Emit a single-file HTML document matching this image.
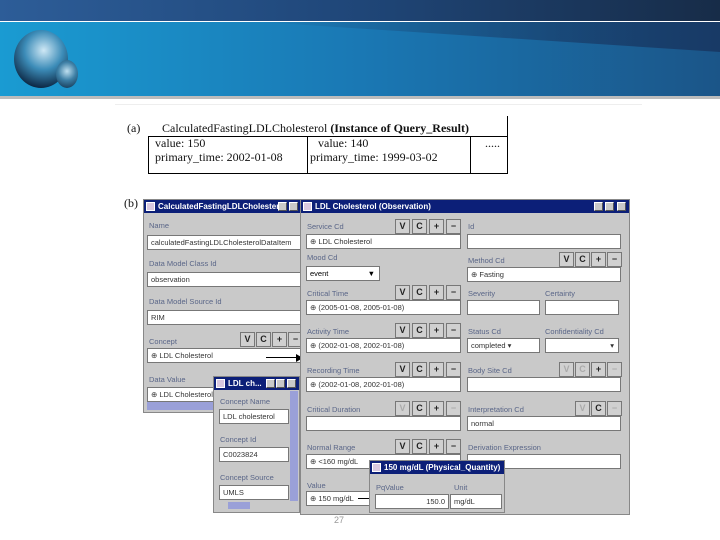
<!DOCTYPE html><html><head><style>
*{margin:0;padding:0;box-sizing:border-box}
body{width:720px;height:540px;position:relative;background:#fff;overflow:hidden;font-family:"Liberation Sans",sans-serif}
.a{position:absolute}
.w{position:absolute;background:#c9c9c9;border:1px solid #888}
.t{position:absolute;background:#0c1f78;color:#fff;font-size:8px;font-weight:bold;line-height:13px;padding-left:14px;white-space:nowrap;overflow:hidden}
.ic{position:absolute;left:2px;top:2px;width:9px;height:9px;background:#d8c8e0;border:1px solid #fff}
.tb{position:absolute;top:2px;width:9px;height:9px;background:#c9c9c9;border:1px solid #fff;border-right-color:#555;border-bottom-color:#555}
.l{position:absolute;font-size:7.5px;color:#5a6688;white-space:nowrap}
.f{position:absolute;background:#fff;border:1px solid #777;font-size:7.5px;line-height:13px;padding-left:3px;color:#333;white-space:nowrap;overflow:hidden}
.b{position:absolute;width:15px;height:15px;border:1px solid #777;background:#d0d0d0;font-size:9px;font-weight:bold;text-align:center;line-height:13px;color:#222}
.g{color:#aaa}
.s{font-family:"Liberation Serif",serif;font-size:12px;color:#111;position:absolute;white-space:nowrap}
</style></head><body>
<div class="a" style="left:0;top:0;width:720px;height:21px;background:linear-gradient(90deg,#2d5d98,#1f4678 50%,#172c48)"></div>
<div class="a" style="left:0;top:22px;width:720px;height:74px;background:linear-gradient(90deg,#1a9bd2,#1a78b4 50%,#1b5588)"></div>
<div class="a" style="left:260px;top:22px;width:460px;height:30px;background:linear-gradient(90deg,rgba(20,50,90,0),#183a66);clip-path:polygon(0 0,100% 0,100% 100%)"></div>
<div class="a" style="left:0;top:96px;width:720px;height:3px;background:#bcbcbc"></div>
<div class="a" style="left:14px;top:30px;width:54px;height:58px;border-radius:50%;background:radial-gradient(circle at 55% 35%,#cfe8f5,#3c8cb8 40%,#0b2440 80%)"></div>
<div class="a" style="left:56px;top:60px;width:22px;height:28px;border-radius:50%;background:radial-gradient(circle at 50% 40%,#bfe0f0,#3d7fa5 45%,#0d2a44)"></div>
<div class="a" style="left:115px;top:104px;width:527px;height:1px;background:#eee"></div>
<div class="s" style="left:127px;top:121px">(a)</div>
<div class="s" style="left:162px;top:121px">CalculatedFastingLDLCholesterol <b>(Instance of Query_Result)</b></div>
<div class="a" style="left:507px;top:116px;width:1px;height:58px;background:#000"></div>
<div class="a" style="left:148px;top:136px;width:360px;height:1px;background:#000"></div>
<div class="a" style="left:148px;top:173px;width:360px;height:1px;background:#000"></div>
<div class="a" style="left:148px;top:136px;width:1px;height:38px;background:#000"></div>
<div class="a" style="left:307px;top:136px;width:1px;height:38px;background:#000"></div>
<div class="a" style="left:470px;top:136px;width:1px;height:38px;background:#000"></div>
<div class="s" style="left:155px;top:136px">value: 150</div>
<div class="s" style="left:155px;top:150px">primary_time: 2002-01-08</div>
<div class="s" style="left:318px;top:136px">value: 140</div>
<div class="s" style="left:310px;top:150px">primary_time: 1999-03-02</div>
<div class="s" style="left:485px;top:136px">.....</div>
<div class="s" style="left:124px;top:196px">(b)</div>

<div class="w" style="left:143px;top:199px;width:158px;height:214px">
<div class="t" style="left:0;top:0;width:156px">CalculatedFastingLDLCholester...</div><div class="ic"></div>
<div class="tb" style="left:134px"></div><div class="tb" style="left:145px"></div>
<div class="l" style="left:5px;top:21px">Name</div>
<div class="f" style="left:3px;top:35px;width:155px;height:15px">calculatedFastingLDLCholesterolDataItem</div>
<div class="l" style="left:5px;top:59px">Data Model Class Id</div>
<div class="f" style="left:3px;top:72px;width:155px;height:15px">observation</div>
<div class="l" style="left:5px;top:97px">Data Model Source Id</div>
<div class="f" style="left:3px;top:110px;width:155px;height:15px">RIM</div>
<div class="l" style="left:5px;top:137px">Concept</div>
<div class="b" style="left:96px;top:132px">V</div><div class="b" style="left:112px;top:132px">C</div><div class="b" style="left:128px;top:132px">+</div><div class="b" style="left:144px;top:132px">−</div>
<div class="f" style="left:3px;top:148px;width:155px;height:15px">⊕ LDL Cholesterol</div>
<div class="l" style="left:5px;top:175px">Data Value</div>
<div class="f" style="left:3px;top:187px;width:155px;height:15px">⊕ LDL Cholesterol</div>
<div class="a" style="left:3px;top:202px;width:70px;height:8px;background:#9aa0d8"></div>
</div>
<div class="a" style="left:266px;top:357px;width:34px;height:1px;background:#000"></div>
<div class="a" style="left:296px;top:354px;border-left:7px solid #000;border-top:4px solid transparent;border-bottom:4px solid transparent"></div>

<div class="w" style="left:300px;top:199px;width:330px;height:316px">
<div class="t" style="left:0;top:0;width:328px">LDL Cholesterol (Observation)</div><div class="ic"></div>
<div class="tb" style="left:293px"></div><div class="tb" style="left:304px"></div><div class="tb" style="left:316px"></div>
<div class="l" style="left:6px;top:22px">Service Cd</div>
<div class="b" style="left:94px;top:19px">V</div><div class="b" style="left:111px;top:19px">C</div><div class="b" style="left:128px;top:19px">+</div><div class="b" style="left:145px;top:19px">−</div>
<div class="f" style="left:5px;top:34px;width:155px;height:15px">⊕ LDL Cholesterol</div>
<div class="l" style="left:167px;top:22px">Id</div>
<div class="f" style="left:166px;top:34px;width:154px;height:15px"></div>
<div class="l" style="left:6px;top:53px">Mood Cd</div>
<div class="f" style="left:5px;top:66px;width:74px;height:15px;color:#000">event <span style="float:right;padding-right:4px">▼</span></div>
<div class="l" style="left:167px;top:56px">Method Cd</div>
<div class="b" style="left:258px;top:52px">V</div><div class="b" style="left:274px;top:52px">C</div><div class="b" style="left:290px;top:52px">+</div><div class="b" style="left:306px;top:52px">−</div>
<div class="f" style="left:166px;top:67px;width:154px;height:15px">⊕ Fasting</div>
<div class="l" style="left:6px;top:89px">Critical Time</div>
<div class="b" style="left:94px;top:85px">V</div><div class="b" style="left:111px;top:85px">C</div><div class="b" style="left:128px;top:85px">+</div><div class="b" style="left:145px;top:85px">−</div>
<div class="f" style="left:5px;top:100px;width:155px;height:15px">⊕ (2005-01-08, 2005-01-08)</div>
<div class="l" style="left:167px;top:89px">Severity</div><div class="l" style="left:244px;top:89px">Certainty</div>
<div class="f" style="left:166px;top:100px;width:73px;height:15px"></div><div class="f" style="left:244px;top:100px;width:74px;height:15px"></div>
<div class="l" style="left:6px;top:127px">Activity Time</div>
<div class="b" style="left:94px;top:123px">V</div><div class="b" style="left:111px;top:123px">C</div><div class="b" style="left:128px;top:123px">+</div><div class="b" style="left:145px;top:123px">−</div>
<div class="f" style="left:5px;top:138px;width:155px;height:15px">⊕ (2002-01-08, 2002-01-08)</div>
<div class="l" style="left:167px;top:127px">Status Cd</div><div class="l" style="left:244px;top:127px">Confidentiality Cd</div>
<div class="f" style="left:166px;top:138px;width:73px;height:15px">completed ▾</div><div class="f" style="left:244px;top:138px;width:74px;height:15px;text-align:right;padding-right:4px">▾</div>
<div class="l" style="left:6px;top:166px">Recording Time</div>
<div class="b" style="left:94px;top:162px">V</div><div class="b" style="left:111px;top:162px">C</div><div class="b" style="left:128px;top:162px">+</div><div class="b" style="left:145px;top:162px">−</div>
<div class="f" style="left:5px;top:177px;width:155px;height:15px">⊕ (2002-01-08, 2002-01-08)</div>
<div class="l" style="left:167px;top:166px">Body Site Cd</div>
<div class="b g" style="left:258px;top:162px">V</div><div class="b g" style="left:274px;top:162px">C</div><div class="b" style="left:290px;top:162px">+</div><div class="b g" style="left:306px;top:162px">−</div>
<div class="f" style="left:166px;top:177px;width:154px;height:15px"></div>
<div class="l" style="left:6px;top:205px">Critical Duration</div>
<div class="b g" style="left:94px;top:201px">V</div><div class="b" style="left:111px;top:201px">C</div><div class="b" style="left:128px;top:201px">+</div><div class="b g" style="left:145px;top:201px">−</div>
<div class="f" style="left:5px;top:216px;width:155px;height:15px"></div>
<div class="l" style="left:167px;top:205px">Interpretation Cd</div>
<div class="b g" style="left:274px;top:201px">V</div><div class="b" style="left:290px;top:201px">C</div><div class="b g" style="left:306px;top:201px">−</div>
<div class="f" style="left:166px;top:216px;width:154px;height:15px">normal</div>
<div class="l" style="left:6px;top:243px">Normal Range</div>
<div class="b" style="left:94px;top:239px">V</div><div class="b" style="left:111px;top:239px">C</div><div class="b" style="left:128px;top:239px">+</div><div class="b" style="left:145px;top:239px">−</div>
<div class="f" style="left:5px;top:254px;width:155px;height:15px">⊕ &lt;160 mg/dL</div>
<div class="l" style="left:167px;top:243px">Derivation Expression</div>
<div class="f" style="left:166px;top:254px;width:154px;height:15px"></div>
<div class="l" style="left:6px;top:281px">Value</div>
<div class="f" style="left:5px;top:291px;width:65px;height:15px">⊕ 150 mg/dL</div>
</div>
<div class="a" style="left:358px;top:498px;width:20px;height:1px;background:#000"></div>
<div class="a" style="left:378px;top:494px;border-left:9px solid #000;border-top:4px solid transparent;border-bottom:4px solid transparent"></div>

<div class="w" style="left:369px;top:460px;width:136px;height:53px">
<div class="t" style="left:0;top:0;width:134px;height:13px">150 mg/dL (Physical_Quantity)</div><div class="ic"></div>
<div class="l" style="left:6px;top:22px">PqValue</div><div class="l" style="left:84px;top:22px">Unit</div>
<div class="f" style="left:5px;top:33px;width:74px;height:15px;text-align:right;padding-right:3px">150.0</div>
<div class="f" style="left:80px;top:33px;width:52px;height:15px">mg/dL</div>
</div>

<div class="w" style="left:213px;top:376px;width:87px;height:137px">
<div class="t" style="left:0;top:0;width:85px">LDL ch...</div><div class="ic"></div>
<div class="tb" style="left:52px"></div><div class="tb" style="left:62px"></div><div class="tb" style="left:73px"></div>
<div class="l" style="left:6px;top:20px">Concept Name</div>
<div class="f" style="left:5px;top:32px;width:70px;height:15px">LDL cholesterol</div>
<div class="l" style="left:6px;top:58px">Concept Id</div>
<div class="f" style="left:5px;top:70px;width:70px;height:15px">C0023824</div>
<div class="l" style="left:6px;top:96px">Concept Source</div>
<div class="f" style="left:5px;top:108px;width:70px;height:15px">UMLS</div>
<div class="a" style="left:76px;top:14px;width:8px;height:110px;background:#9aa0d8"></div>
<div class="a" style="left:14px;top:125px;width:22px;height:7px;background:#9aa0d8"></div>
</div>
<div class="a" style="left:334px;top:515px;font-size:9px;color:#999">27</div>
</body></html>
